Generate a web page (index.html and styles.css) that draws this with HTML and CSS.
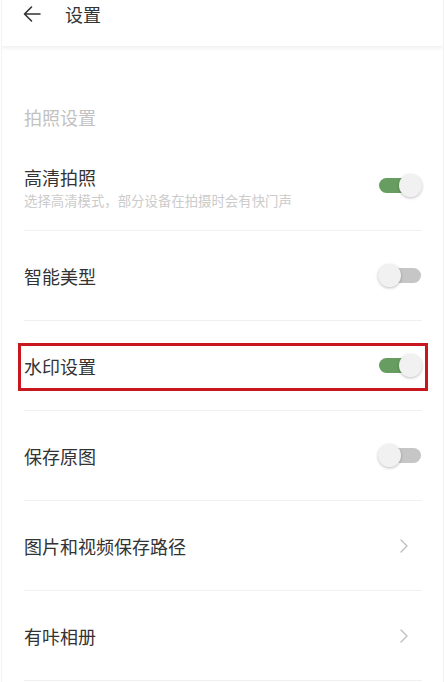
FILE: index.html
```html
<!DOCTYPE html>
<html lang="zh-CN">
<head>
    <meta charset="UTF-8">
    <meta name="viewport" content="width=device-width, initial-scale=1.0">
    <title>设置</title>
    <link rel="stylesheet" href="styles.css">
</head>
<body>
<div class="page">
    <header class="top-bar">
        <svg class="back-icon" width="20" height="20" viewBox="0 0 20 20">
            <path d="M18 10H2.5M9.5 3L2.5 10l7 7" fill="none" stroke="#333" stroke-width="1.6" stroke-linecap="round" stroke-linejoin="round"/>
        </svg>
        <h1>设置</h1>
    </header>

    <div class="section-title">拍照设置</div>

    <div class="setting-row tall">
        <div class="setting-text">
            <div class="setting-name">高清拍照</div>
            <div class="setting-desc">选择高清模式，部分设备在拍摄时会有快门声</div>
        </div>
        <span class="switch on"></span>
    </div>

    <div class="setting-row">
        <div class="setting-name">智能美型</div>
        <span class="switch"></span>
    </div>

    <div class="setting-row highlighted">
        <div class="setting-name">水印设置</div>
        <span class="switch on"></span>
    </div>

    <div class="setting-row">
        <div class="setting-name">保存原图</div>
        <span class="switch"></span>
    </div>

    <div class="setting-row">
        <div class="setting-name">图片和视频保存路径</div>
        <svg class="chevron" width="20" height="14" viewBox="0 0 20 14">
            <path d="M7 1l6 6-6 6" fill="none" stroke="#bdbdbd" stroke-width="1.3" stroke-linecap="round" stroke-linejoin="round"/>
        </svg>
    </div>

    <div class="setting-row">
        <div class="setting-name">有咔相册</div>
        <svg class="chevron" width="20" height="14" viewBox="0 0 20 14">
            <path d="M7 1l6 6-6 6" fill="none" stroke="#bdbdbd" stroke-width="1.3" stroke-linecap="round" stroke-linejoin="round"/>
        </svg>
    </div>
</div>
</body>
</html>
```

FILE: styles.css
```css
/* Global Styles */
body {
    margin: 0;
    background-color: #ffffff;
    font-family: "Noto Sans CJK SC", "Noto Sans", sans-serif;
    color: #333;
}

.page {
    margin: 0 1px;
    min-height: 682px;
    border-left: 1px solid #f2f2f2;
    border-right: 1px solid #f2f2f2;
    overflow: hidden;
}

.top-bar {
    display: flex;
    align-items: center;
    height: 46px;
    padding: 0 0 18px 20px;
    box-sizing: border-box;
    background-color: #fff;
    box-shadow: 0 2px 4px rgba(0, 0, 0, 0.07);
}

.back-icon {
    flex-shrink: 0;
}

.top-bar h1 {
    margin: 0 0 0 23px;
    font-size: 18px;
    font-weight: normal;
    line-height: 24px;
    color: #333;
}

.section-title {
    margin: 0 21px 0 22px;
    padding: 59px 0 11px;
    font-size: 18px;
    line-height: 24px;
    color: #c2c2c2;
}

.setting-row {
    position: relative;
    display: flex;
    align-items: center;
    justify-content: space-between;
    height: 89px;
    margin: 0 21px 0 22px;
    border-bottom: 1px solid #f0f0f0;
}

.setting-row.tall {
    height: 90px;
}

.setting-text {
    padding-top: 4px;
}

.setting-name {
    font-size: 18px;
    line-height: 24px;
    color: #333;
}

.setting-desc {
    margin-top: 2px;
    font-size: 13.4px;
    line-height: 18px;
    color: #cbcbcb;
}

.highlighted::after {
    content: "";
    position: absolute;
    left: -6px;
    right: -6px;
    top: 22px;
    height: 42px;
    border: 3px solid #c8171e;
}

/* Switch */
.switch {
    position: relative;
    width: 42px;
    height: 15px;
    margin-right: 1px;
    border-radius: 8px;
    background-color: #c6c6c6;
}

.switch::before {
    content: "";
    position: absolute;
    top: -4px;
    left: -1px;
    width: 23px;
    height: 23px;
    border-radius: 50%;
    background-color: #f1f1f1;
    box-shadow: 0 1px 3px rgba(0, 0, 0, 0.25);
}

.switch.on {
    background-color: #689d61;
}

.switch.on::before {
    left: auto;
    right: -1px;
}

.chevron {
    margin-right: 8px;
}
```
